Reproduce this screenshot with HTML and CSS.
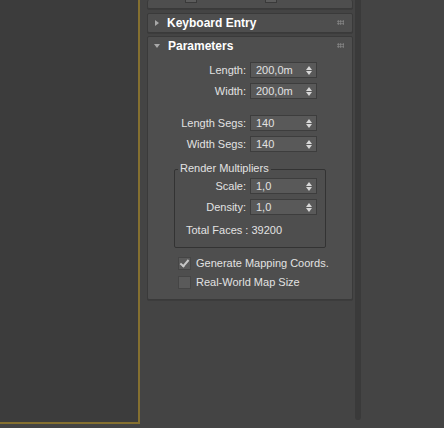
FILE: index.html
```html
<!DOCTYPE html>
<html>
<head>
<meta charset="utf-8">
<link rel="stylesheet" href="styles.css">
</head>
<body>
<div class="screen">
  <div class="viewport"></div>
  <div class="column">
    <div class="panel stub"><span class="stub-box a"></span><span class="stub-box b"></span></div>
    <div class="panel">
      <div class="head"><span class="tri right"></span><span class="title">Keyboard Entry</span><span class="grip"></span></div>
    </div>
    <div class="panel params">
      <div class="head"><span class="tri down"></span><span class="title">Parameters</span><span class="grip"></span></div>
      <div class="body">
        <div class="row"><span class="lbl">Length:</span><span class="spin">200,0m<i class="arr"></i></span></div>
        <div class="row"><span class="lbl">Width:</span><span class="spin">200,0m<i class="arr"></i></span></div>
        <div class="row sep"><span class="lbl">Length Segs:</span><span class="spin">140<i class="arr"></i></span></div>
        <div class="row"><span class="lbl">Width Segs:</span><span class="spin">140<i class="arr"></i></span></div>
        <div class="group">
          <span class="legend">Render Multipliers</span>
          <div class="row g"><span class="lbl">Scale:</span><span class="spin">1,0<i class="arr"></i></span></div>
          <div class="row g"><span class="lbl">Density:</span><span class="spin">1,0<i class="arr"></i></span></div>
          <div class="faces">Total Faces : 39200</div>
        </div>
        <div class="check"><span class="box on"></span>Generate Mapping Coords.</div>
        <div class="check"><span class="box"></span>Real-World Map Size</div>
      </div>
    </div>
  </div>
  <div class="scroll"></div>
</div>
</body>
</html>
```
FILE: styles.css
```css
html, body {
  margin: 0;
  padding: 0;
  background: #444444;
  font-family: "Liberation Sans", Arial, sans-serif;
  font-size: 11px;
  color: #e2e2e2;
}
.screen {
  display: flex;
  align-items: flex-start;
  width: 444px;
  height: 428px;
  overflow: hidden;
}
.viewport {
  width: 138px;
  height: 422px;
  background: #3c3c3c;
  border-right: 2px solid #857030;
  border-bottom: 2px solid #857030;
  flex: none;
}
.column {
  width: 206px;
  margin-left: 7px;
  display: flex;
  flex-direction: column;
  gap: 3px;
  flex: none;
}
.panel {
  background: #4e4e4e;
  border: 1px solid #3a3a3a;
  border-radius: 2px;
  box-shadow: 0 1px 0 #3c3c3c;
}
.stub {
  height: 8px;
  border-top: none;
  position: relative;
  margin-bottom: 1px;
  overflow: hidden;
}
.stub-box {
  position: absolute;
  top: -9px;
  width: 10px;
  height: 10px;
  background: #5c5c5c;
  border: 1px solid #3a3a3a;
}
.stub-box.a { left: 37px; }
.stub-box.b { left: 117px; }
.head {
  height: 18px;
  display: flex;
  align-items: center;
  position: relative;
}
.tri {
  width: 0;
  height: 0;
  margin-left: 6px;
  margin-right: 8px;
}
.tri.right {
  border-top: 3px solid transparent;
  border-bottom: 3px solid transparent;
  border-left: 4px solid #a8a8a8;
  margin-left: 7px;
  margin-right: 8px;
}
.tri.down {
  border-left: 3px solid transparent;
  border-right: 3px solid transparent;
  border-top: 4px solid #a8a8a8;
  margin-left: 6px;
}
.title {
  font-family: "Liberation Sans", Arial, sans-serif;
  font-weight: bold;
  font-size: 12px;
  color: #ffffff;
}
.grip {
  position: absolute;
  right: 8px;
  top: 6px;
  width: 7px;
  height: 5px;
  background-image: radial-gradient(circle, #8a8a8a 0.8px, transparent 1px);
  background-size: 2.5px 2.5px;
}
.params .head { height: 18px; }
.body {
  padding: 7px 0 10px 0;
}
.row {
  display: flex;
  align-items: center;
  height: 16px;
  margin-bottom: 5px;
}
.row.sep { margin-top: 16px; }
.lbl {
  width: 98px;
  text-align: right;
  flex: none;
}
.spin {
  position: relative;
  margin-left: 4px;
  width: 60px;
  height: 14px;
  line-height: 14px;
  padding-left: 5px;
  background: #595959;
  border: 1px solid #3d3d3d;
  color: #e2e2e2;
  flex: none;
}
.arr {
  position: absolute;
  right: 4px;
  top: 3px;
  width: 6px;
  height: 9px;
}
.arr::before, .arr::after {
  content: "";
  position: absolute;
  left: 0;
  width: 0;
  height: 0;
  border-left: 3px solid transparent;
  border-right: 3px solid transparent;
}
.arr::before { top: 0; border-bottom: 4px solid #d8d8d8; }
.arr::after { bottom: 0; border-top: 4px solid #d8d8d8; }
.group {
  position: relative;
  margin: 17px 0 0 26px;
  width: 150px;
  border: 1px solid #333333;
  border-radius: 2px;
  padding: 8px 0 9px 0;
}
.legend {
  position: absolute;
  top: -8px;
  left: 3px;
  padding: 0 2px;
  background: #4e4e4e;
}
.group .lbl { width: 71px; }
.group .row.g { margin-bottom: 5px; }
.faces {
  margin: 9px 0 0 11px;
  height: 14px;
}
.check {
  display: flex;
  align-items: center;
  margin: 8px 0 0 30px;
  height: 14px;
}
.check + .check { margin-top: 5px; }
.box {
  width: 11px;
  height: 11px;
  background: #5a5a5a;
  border: 1px solid #454545;
  margin-right: 5px;
  position: relative;
}
.box.on::after {
  content: "";
  position: absolute;
  left: 3px;
  top: 0px;
  width: 3px;
  height: 7px;
  border-right: 2px solid #c8c8c8;
  border-bottom: 2px solid #c8c8c8;
  transform: rotate(40deg);
}
.scroll {
  width: 6px;
  height: 420px;
  margin-left: 2px;
  background: #3a3a3a;
  border-radius: 0 0 3px 3px;
  flex: none;
}
```
